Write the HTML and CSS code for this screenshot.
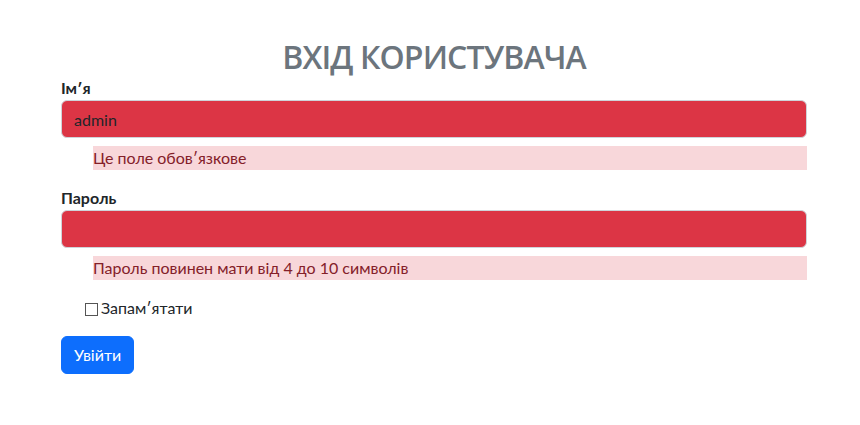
FILE: index.html
```html
<!DOCTYPE html>
<html lang="uk">
<head>
<meta charset="utf-8">
<title>Вхід користувача</title>
<link rel="stylesheet" href="styles.css">
</head>
<body>
<main class="page">
  <h2 class="title">ВХІД КОРИСТУВАЧА</h2>
  <form class="login-form">
    <div class="field">
      <label class="field-label" for="name">Ім′я</label>
      <input class="field-input is-invalid" id="name" type="text" value="admin">
      <div class="field-error">Це поле обов′язкове</div>
    </div>
    <div class="field">
      <label class="field-label" for="pass">Пароль</label>
      <input class="field-input is-invalid" id="pass" type="password" value="">
      <div class="field-error">Пароль повинен мати від 4 до 10 символів</div>
    </div>
    <div class="remember">
      <input class="remember-box" id="remember" type="checkbox">
      <label class="remember-label" for="remember">Запам′ятати</label>
    </div>
    <button class="submit-btn" type="button">Увійти</button>
  </form>
</main>
</body>
</html>
```
FILE: styles.css
```css
* { box-sizing: border-box; }
html, body { margin: 0; background: #fff; }
body {
  font-family: Lato, "Liberation Sans", sans-serif;
  font-size: 16px;
  line-height: 24px;
  color: #212529;
}
.page {
  width: 746px;
  margin-left: 61px;
  padding-top: 38px;
}
.title {
  margin: 0;
  font-family: "Open Sans", sans-serif;
  font-size: 32px;
  font-weight: 600;
  line-height: 38px;
  letter-spacing: -0.9px;
  color: #6c757d;
  text-align: center;
}
.login-form {
  display: flex;
  flex-direction: column;
}
.field {
  display: flex;
  flex-direction: column;
  margin-bottom: 16px;
}
.field-label {
  font-weight: 700;
  line-height: 24px;
  height: 24px;
}
.field-input {
  height: 38px;
  padding: 6px 12px;
  font-family: inherit;
  font-size: 16px;
  line-height: 24px;
  color: #212529;
  border: 1px solid #ced4da;
  border-radius: 6px;
  outline: none;
}
.field-input.is-invalid { background: #dc3545; }
.field-error {
  margin-top: 8px;
  margin-left: 32px;
  height: 24px;
  background: #f8d7da;
  color: #842029;
}
.remember {
  display: flex;
  align-items: center;
  margin-left: 24px;
  height: 24px;
}
.remember-box {
  appearance: none;
  -webkit-appearance: none;
  width: 13px;
  height: 13px;
  margin: 2px 3px 0 0;
  border: 1px solid #555;
  border-radius: 0;
  background: #fff;
}
.remember-label { line-height: 24px; }
.submit-btn {
  align-self: flex-start;
  margin-top: 16px;
  height: 38px;
  padding: 6px 12px;
  font-family: inherit;
  font-size: 16px;
  line-height: 24px;
  color: #fff;
  background: #0d6efd;
  border: 1px solid #0d6efd;
  border-radius: 6px;
}
```
